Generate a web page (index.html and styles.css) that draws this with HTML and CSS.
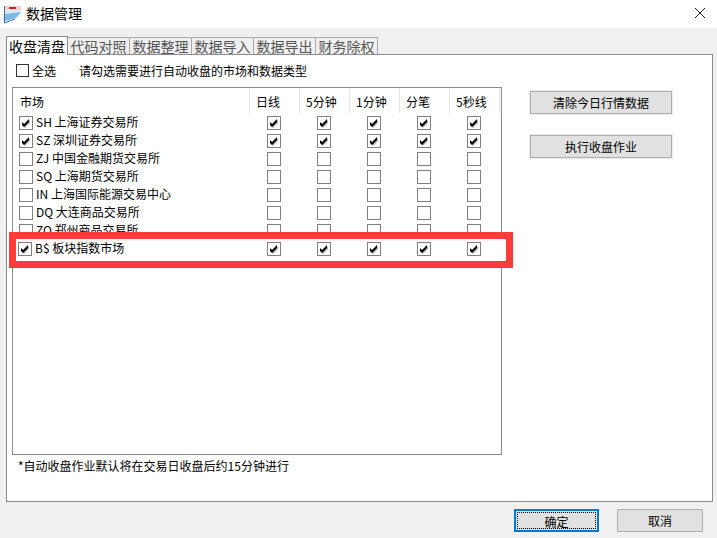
FILE: index.html
```html
<!DOCTYPE html>
<html lang="zh-CN">
<head>
<meta charset="UTF-8" />
<title>数据管理</title>
<link rel="stylesheet" href="styles.css">
</head>
<body>
<svg class="defs" width="0" height="0">
  <symbol id="tick" viewBox="0 0 12 12">
    <path d="M3 6 5 8 10 3 10 6 5 11 3 9Z" fill="#b4b4b4"/>
    <path d="M2 5 4 7 9 2 9 5 4 10 2 8Z" fill="#000"/>
  </symbol>
</svg>

<div class="dialog">
  <div class="titlebar">
    <svg class="app-icon" width="18" height="18" viewBox="0 0 18 18">
      <path d="M2 1H18V8L12 13 1 18Z" fill="#dce9f7"/>
      <path d="M2 1H18V5H2Z" fill="#f0d0d0"/>
      <path d="M6 2H13V4H6Z" fill="#b03030"/>
      <path d="M2 9 18 7 13 13 2 16Z" fill="#7db8ea"/>
      <path d="M1.500 1V18L12 14" fill="none" stroke="#3f6f9f"/>
    </svg>
    <span class="title">数据管理</span>
    <svg class="close" width="12" height="12" viewBox="0 0 12 12">
      <path d="M1 1 11 11M11 1 1 11" stroke="#222" fill="none"/>
    </svg>
  </div>

  <div class="content">
    <div class="tabs">
      <div class="tab active">收盘清盘</div>
      <div class="tab">代码对照</div>
      <div class="tab">数据整理</div>
      <div class="tab">数据导入</div>
      <div class="tab">数据导出</div>
      <div class="tab">财务除权</div>
    </div>

    <div class="panel">
      <div class="select-row">
        <span class="box big"></span>
        <span class="select-all">全选</span>
        <span class="hint">请勾选需要进行自动收盘的市场和数据类型</span>
      </div>

      <div class="main-row">
        <div class="list">
          <div class="row head">
            <div class="cell first">市场</div>
            <div class="cell">日线</div>
            <div class="cell">5分钟</div>
            <div class="cell">1分钟</div>
            <div class="cell">分笔</div>
            <div class="cell">5秒线</div>
          </div>

          <div class="row">
            <div class="cell first"><span class="box"><svg><use href="#tick"/></svg></span>SH 上海证券交易所</div>
            <div class="cell"><span class="box"><svg><use href="#tick"/></svg></span></div>
            <div class="cell"><span class="box"><svg><use href="#tick"/></svg></span></div>
            <div class="cell"><span class="box"><svg><use href="#tick"/></svg></span></div>
            <div class="cell"><span class="box"><svg><use href="#tick"/></svg></span></div>
            <div class="cell"><span class="box"><svg><use href="#tick"/></svg></span></div>
          </div>
          <div class="row">
            <div class="cell first"><span class="box"><svg><use href="#tick"/></svg></span>SZ 深圳证券交易所</div>
            <div class="cell"><span class="box"><svg><use href="#tick"/></svg></span></div>
            <div class="cell"><span class="box"><svg><use href="#tick"/></svg></span></div>
            <div class="cell"><span class="box"><svg><use href="#tick"/></svg></span></div>
            <div class="cell"><span class="box"><svg><use href="#tick"/></svg></span></div>
            <div class="cell"><span class="box"><svg><use href="#tick"/></svg></span></div>
          </div>
          <div class="row">
            <div class="cell first"><span class="box"></span>ZJ 中国金融期货交易所</div>
            <div class="cell"><span class="box"></span></div>
            <div class="cell"><span class="box"></span></div>
            <div class="cell"><span class="box"></span></div>
            <div class="cell"><span class="box"></span></div>
            <div class="cell"><span class="box"></span></div>
          </div>
          <div class="row">
            <div class="cell first"><span class="box"></span>SQ 上海期货交易所</div>
            <div class="cell"><span class="box"></span></div>
            <div class="cell"><span class="box"></span></div>
            <div class="cell"><span class="box"></span></div>
            <div class="cell"><span class="box"></span></div>
            <div class="cell"><span class="box"></span></div>
          </div>
          <div class="row">
            <div class="cell first"><span class="box"></span>IN 上海国际能源交易中心</div>
            <div class="cell"><span class="box"></span></div>
            <div class="cell"><span class="box"></span></div>
            <div class="cell"><span class="box"></span></div>
            <div class="cell"><span class="box"></span></div>
            <div class="cell"><span class="box"></span></div>
          </div>
          <div class="row">
            <div class="cell first"><span class="box"></span>DQ 大连商品交易所</div>
            <div class="cell"><span class="box"></span></div>
            <div class="cell"><span class="box"></span></div>
            <div class="cell"><span class="box"></span></div>
            <div class="cell"><span class="box"></span></div>
            <div class="cell"><span class="box"></span></div>
          </div>
          <div class="row">
            <div class="cell first"><span class="box"></span>ZO 郑州商品交易所</div>
            <div class="cell"><span class="box"></span></div>
            <div class="cell"><span class="box"></span></div>
            <div class="cell"><span class="box"></span></div>
            <div class="cell"><span class="box"></span></div>
            <div class="cell"><span class="box"></span></div>
          </div>
        </div>

        <div class="side">
          <button class="btn">清除今日行情数据</button>
          <button class="btn">执行收盘作业</button>
        </div>
      </div>

      <div class="note">*自动收盘作业默认将在交易日收盘后约15分钟进行</div>

      <!-- red marker pasted over the list, covers the real row -->
      <div class="marker">
        <div class="row">
          <div class="cell first"><span class="box"><svg><use href="#tick"/></svg></span>B$ 板块指数市场</div>
          <div class="cell"><span class="box"><svg><use href="#tick"/></svg></span></div>
          <div class="cell"><span class="box"><svg><use href="#tick"/></svg></span></div>
          <div class="cell"><span class="box"><svg><use href="#tick"/></svg></span></div>
          <div class="cell"><span class="box"><svg><use href="#tick"/></svg></span></div>
          <div class="cell"><span class="box"><svg><use href="#tick"/></svg></span></div>
        </div>
      </div>
    </div>

    <div class="footer">
      <button class="btn ok"><span class="focus">确定</span></button>
      <button class="btn cancel">取消</button>
    </div>
  </div>
</div>
</body>
</html>
```

FILE: styles.css
```css
* { box-sizing:border-box; }
html, body { margin:0; padding:0; }
body { width:717px; height:538px; overflow:hidden; background:#f0f0f0; color:#000; font-family:"Noto Sans CJK SC", "Liberation Sans", sans-serif; font-size:12px; }
.defs { position:absolute; }

.dialog { display:flex; flex-direction:column; height:538px; }
.titlebar { height:28px; background:#fff; display:flex; align-items:center; padding:0 11px 0 3px; }
.app-icon { margin-right:5px; }
.title { font-size:14px; flex:1; padding-bottom:2px; }
.close { margin-bottom:3px; }

.content { flex:1; padding:8px 4px 0 6px; display:flex; flex-direction:column; }

.tabs { display:flex; height:18px; align-items:flex-end; }
.tab { width:62px; height:17px; line-height:17px; font-size:14px; text-align:center; color:#555; background:#f0f0f0; border:1px solid #a8a8a8; border-bottom:none; border-left:none; white-space:nowrap; }
.tab.active { width:62px; height:19px; line-height:18px; color:#000; background:#fff; border:1px solid #8a8a90; border-bottom:none; position:relative; top:1px; z-index:1; }

.panel { position:relative; height:448px; background:#fff; border:1px solid #8a8a90; padding:0 5px; }

.select-row { height:30px; margin-bottom:2px; display:flex; align-items:center; padding:0 0 0 4px; }
.select-all { margin-left:3px; }
.hint { margin-left:23px; }

.main-row { display:flex; }
.list { width:490px; height:368px; border:1px solid #8a8a90; overflow:hidden; }
.side { margin-left:28px; padding-top:4px; display:flex; flex-direction:column; gap:21px; }

.row { display:grid; grid-template-columns:236px repeat(5, 50px); height:18px; }
.row.head { grid-template-columns:237px repeat(5, 50px); height:25px; }
.cell { display:flex; align-items:center; justify-content:center; white-space:nowrap; }
.cell.first { justify-content:flex-start; padding-left:6px; padding-bottom:2px; }
.head .cell { justify-content:flex-start; padding-left:6px; padding-top:2px; padding-bottom:0; border-right:1px solid #e4e4e4; }
.head .cell.first { padding-left:7px; padding-bottom:0; }

.box { flex:none; display:block; width:14px; height:14px; border:1px solid #808080; background:#fff; }
.box svg { display:block; width:12px; height:12px; }
.cell.first .box { margin:0 3px -2px 0; }
.box.big { width:13px; height:13px; border-color:#333; }

.note { padding:4px 0 0 6px; line-height:14px; }

.marker { position:absolute; left:2px; top:177px; width:504px; height:36px; border:7px solid #ff3b3b; background:#fff; }
.marker .row { margin-left:-3px; }
.marker .cell.first { padding-left:5px; }

.btn { display:block; width:142px; height:23px; padding:0; font:inherit; color:#000; background:#e1e1e1; border:1px solid #adadad; outline:1px solid #ececec; }

.footer { display:flex; justify-content:flex-end; padding:7px 10px 0 0; gap:18px; }
.footer .btn { width:86px; outline:none; }
.btn.ok { width:85px; border:2px solid #0078d7; padding:1px; }
.focus { display:block; height:100%; line-height:17px; border:1px dotted #000; }
```
